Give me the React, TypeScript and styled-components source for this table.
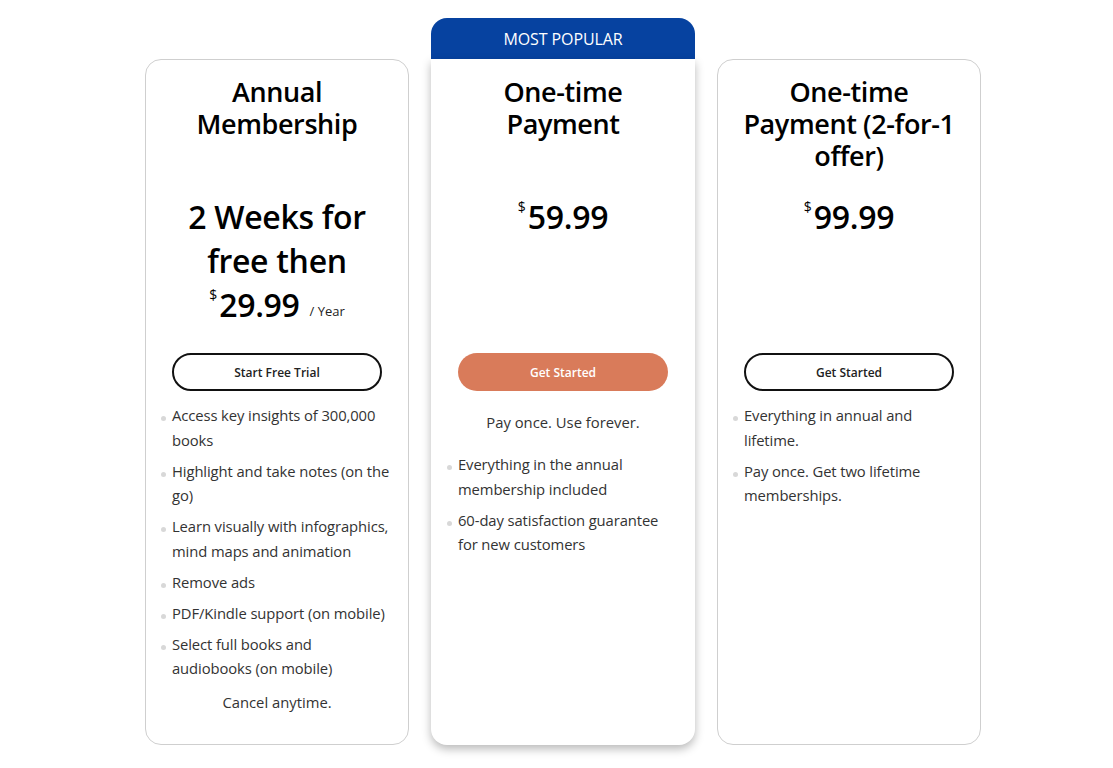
import React from "react";
import styled, { createGlobalStyle } from "styled-components";

const Global = createGlobalStyle`
  html, body { margin: 0; padding: 0; background: #ffffff; }
  body { font-family: "Open Sans", "Noto Sans", sans-serif; color: #000; }
  * { box-sizing: border-box; }
`;

const Page = styled.div`
  display: flex;
  justify-content: center;
  padding: 18px 0 24px 13px;
`;

const Row = styled.div`
  display: flex;
  align-items: stretch;
  gap: 22px;
`;

const Column = styled.div<{ $offset?: boolean }>`
  width: 264px;
  display: flex;
  flex-direction: column;
  padding-top: ${(p) => (p.$offset ? "41px" : "0")};
`;

const Badge = styled.div`
  height: 41px;
  background: #0642a0;
  color: #fff;
  border-radius: 16px 16px 0 0;
  display: flex;
  align-items: center;
  justify-content: center;
  font-size: 16px;
  letter-spacing: -0.1px;
`;

const Card = styled.div<{ $featured?: boolean }>`
  flex: 1;
  background: #fff;
  border: ${(p) => (p.$featured ? "none" : "1px solid #cfcfcf")};
  border-radius: ${(p) => (p.$featured ? "0 0 16px 16px" : "16px")};
  box-shadow: ${(p) => (p.$featured ? "0 4px 10px rgba(0,0,0,0.28)" : "none")};
  padding: ${(p) => (p.$featured ? "17px 16px 30px" : "16px 15px 30px")};
  display: flex;
  flex-direction: column;
  align-items: center;
`;

const Title = styled.h2`
  margin: 0;
  height: 119px;
  width: 100%;
  text-align: center;
  font-size: 27px;
  font-weight: 600;
  line-height: 32px;
  letter-spacing: -0.4px;
`;

const PriceBlock = styled.div`
  height: 158px;
  width: 100%;
  text-align: center;
`;

const Lead = styled.div`
  font-size: 32px;
  font-weight: 600;
  line-height: 44px;
  letter-spacing: -0.3px;
`;

const Price = styled.div`
  display: inline-flex;
  align-items: flex-start;
  line-height: 44px;
`;

const Dollar = styled.span`
  font-size: 14px;
  line-height: 20px;
  margin-top: 2px;
  margin-right: 2px;
`;

const Amount = styled.span`
  font-size: 32px;
  font-weight: 600;
  letter-spacing: -0.3px;
`;

const Per = styled.span`
  font-size: 13px;
  color: #222;
  margin-left: 10px;
  align-self: flex-end;
  line-height: 32px;
`;

const Button = styled.button<{ $filled?: boolean }>`
  width: 210px;
  height: 38px;
  border-radius: 19px;
  border: ${(p) => (p.$filled ? "none" : "2px solid #111")};
  background: ${(p) => (p.$filled ? "#d97b5a" : "#fff")};
  color: ${(p) => (p.$filled ? "#fff" : "#222")};
  font-family: "Open Sans", sans-serif;
  font-size: 12px;
  font-weight: 600;
  cursor: pointer;
  flex-shrink: 0;
`;

const Note = styled.p<{ $top?: number }>`
  margin: ${(p) => p.$top ?? 19}px 0 0;
  font-size: 14.8px;
  color: #333;
  line-height: 24px;
  text-align: center;
`;

const List = styled.ul<{ $top?: number }>`
  list-style: none;
  margin: ${(p) => p.$top ?? 12}px 0 0;
  padding: 0;
  width: 100%;
  display: flex;
  flex-direction: column;
  gap: 6.5px;
`;

const Item = styled.li`
  position: relative;
  padding-left: 11px;
  font-size: 14.8px;
  line-height: 24.5px;
  color: #333;
  letter-spacing: -0.1px;
  &::before {
    content: "";
    position: absolute;
    left: 0;
    top: 13px;
    width: 5px;
    height: 5px;
    border-radius: 50%;
    background: #d8d8d8;
  }
`;

const Plan: React.FC<{
  title: string;
  lead?: string[];
  amount: string;
  per?: string;
  button: string;
  filled?: boolean;
  featured?: boolean;
  pre?: string;
  items: string[];
  post?: string;
}> = (p) => (
  <Column $offset={!p.featured}>
    {p.featured && <Badge>MOST POPULAR</Badge>}
    <Card $featured={p.featured}>
      <Title>{p.title}</Title>
      <PriceBlock>
        {p.lead && p.lead.map((l) => <Lead key={l}>{l}</Lead>)}
        <Price>
          <Dollar>$</Dollar>
          <Amount>{p.amount}</Amount>
          {p.per && <Per>{p.per}</Per>}
        </Price>
      </PriceBlock>
      <Button $filled={p.filled}>{p.button}</Button>
      {p.pre && <Note>{p.pre}</Note>}
      <List $top={p.pre ? 18 : 12}>
        {p.items.map((it) => (
          <Item key={it}>{it}</Item>
        ))}
      </List>
      {p.post && <Note $top={9}>{p.post}</Note>}
    </Card>
  </Column>
);

export default function App() {
  return (
    <>
      <Global />
      <Page>
        <Row>
          <Plan
            title="Annual Membership"
            lead={["2 Weeks for", "free then"]}
            amount="29.99"
            per="/ Year"
            button="Start Free Trial"
            items={[
              "Access key insights of 300,000 books",
              "Highlight and take notes (on the go)",
              "Learn visually with infographics, mind maps and animation",
              "Remove ads",
              "PDF/Kindle support (on mobile)",
              "Select full books and audiobooks (on mobile)",
            ]}
            post="Cancel anytime."
          />
          <Plan
            featured
            title="One-time Payment"
            amount="59.99"
            button="Get Started"
            filled
            pre="Pay once. Use forever."
            items={[
              "Everything in the annual membership included",
              "60-day satisfaction guarantee for new customers",
            ]}
          />
          <Plan
            title="One-time Payment (2-for-1 offer)"
            amount="99.99"
            button="Get Started"
            items={[
              "Everything in annual and lifetime.",
              "Pay once. Get two lifetime memberships.",
            ]}
          />
        </Row>
      </Page>
    </>
  );
}
